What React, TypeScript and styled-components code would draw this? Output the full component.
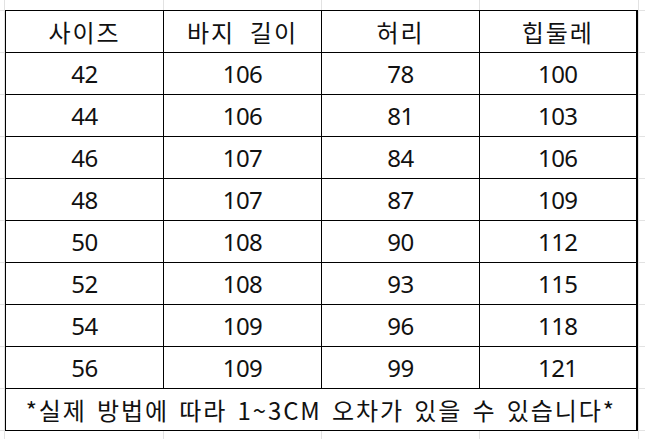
import React from "react";
import styled, { createGlobalStyle } from "styled-components";

type SizeRow = {
  size: number;
  length: number;
  waist: number;
  hip: number;
};

const rows: SizeRow[] = [
  { size: 42, length: 106, waist: 78, hip: 100 },
  { size: 44, length: 106, waist: 81, hip: 103 },
  { size: 46, length: 107, waist: 84, hip: 106 },
  { size: 48, length: 107, waist: 87, hip: 109 },
  { size: 50, length: 108, waist: 90, hip: 112 },
  { size: 52, length: 108, waist: 93, hip: 115 },
  { size: 54, length: 109, waist: 96, hip: 118 },
  { size: 56, length: 109, waist: 99, hip: 121 },
];

const headers = ["사이즈", "바지  길이", "허리", "힙둘레"];

const App: React.FC = () => {
  return (
    <>
      <GlobalStyle />
      <Sheet>
        <SizeTable>
          <colgroup>
            <Col $w={158} />
            <Col $w={158} />
            <Col $w={158} />
            <Col $w={157} />
          </colgroup>
          <thead>
            <tr>
              {headers.map((h) => (
                <HeadCell key={h}>{h}</HeadCell>
              ))}
            </tr>
          </thead>
          <tbody>
            {rows.map((row) => (
              <tr key={row.size}>
                <Cell>{row.size}</Cell>
                <Cell>{row.length}</Cell>
                <Cell>{row.waist}</Cell>
                <Cell>{row.hip}</Cell>
              </tr>
            ))}
            <tr>
              <NoteCell colSpan={4}>
                *실제 방법에 따라 1~3CM 오차가 있을 수 있습니다*
              </NoteCell>
            </tr>
          </tbody>
        </SizeTable>
      </Sheet>
    </>
  );
};

export default App;

const GlobalStyle = createGlobalStyle`
  html, body {
    margin: 0;
    padding: 0;
    background: #fff;
  }
  body {
    width: 645px;
    height: 439px;
    overflow: hidden;
    /* excel gridlines behind the table */
    background-image:
      linear-gradient(to right, transparent 4px, #e2e2e2 4px, #e2e2e2 5px, transparent 5px),
      linear-gradient(to right, transparent 163px, #e2e2e2 163px, #e2e2e2 164px, transparent 164px),
      linear-gradient(to right, transparent 321px, #e2e2e2 321px, #e2e2e2 322px, transparent 322px),
      linear-gradient(to right, transparent 479px, #e2e2e2 479px, #e2e2e2 480px, transparent 480px),
      linear-gradient(to right, transparent 638px, #e2e2e2 638px, #e2e2e2 639px, transparent 639px),
      repeating-linear-gradient(to bottom, #e2e2e2 0, #e2e2e2 1px, transparent 1px, transparent 42px);
    background-position: 0 0, 0 0, 0 0, 0 0, 0 0, 0 10px;
    font-family: "Noto Sans", "Noto Sans CJK KR", sans-serif;
    color: #000;
  }
`;

const Sheet = styled.div`
  padding: 10px 0 0 5px;
`;

const SizeTable = styled.table`
  border-collapse: collapse;
  table-layout: fixed;
  width: 632px;
  background: #fff;
  border: 1px solid #000;
  border-right-width: 2px;
`;

const Col = styled.col<{ $w: number }>`
  width: ${(p) => p.$w}px;
`;

const Cell = styled.td`
  height: 41px;
  padding: 0;
  border: 1px solid #000;
  text-align: center;
  vertical-align: middle;
  font-family: "Noto Sans", "Noto Sans CJK KR", sans-serif;
  font-size: 24px;
  line-height: 1;
  letter-spacing: -0.5px;
  color: #111;
`;

const HeadCell = styled(Cell).attrs({ as: "th" })`
  font-weight: normal;
  font-family: "Noto Sans CJK KR", sans-serif;
  font-size: 24px;
  letter-spacing: 2px;
  white-space: pre;
`;

const NoteCell = styled(Cell)`
  font-family: "Noto Sans CJK KR", sans-serif;
  font-size: 24px;
  letter-spacing: 1.9px;
  word-spacing: 3px;
`;
